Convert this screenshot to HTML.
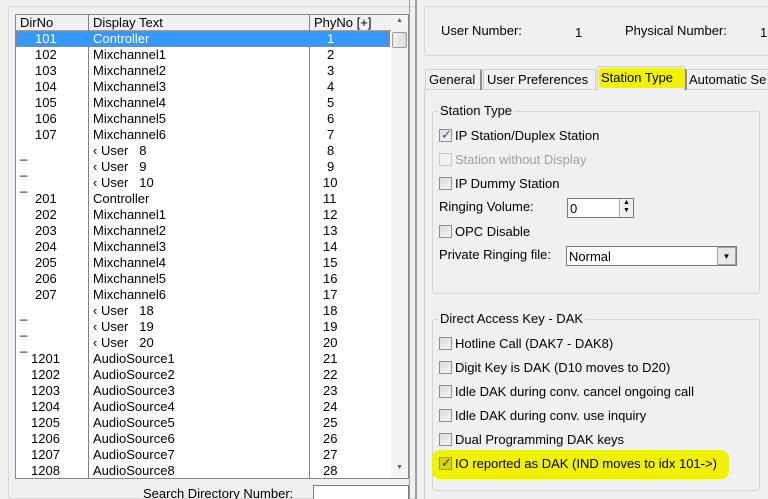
<!DOCTYPE html>
<html><head><style>
*{margin:0;padding:0;box-sizing:border-box}
html,body{width:768px;height:499px;overflow:hidden}
body{background:#f0f0f0;font-family:"Liberation Sans",sans-serif;font-size:13px;color:#000;position:relative}
.a{position:absolute;white-space:nowrap}
.row{position:absolute;left:17px;width:374px;height:16px;line-height:16px}
.row span{position:absolute;top:0}
.cb{position:absolute;width:13px;height:13px;border:1px solid #8f8f8f;background:linear-gradient(135deg,#dcdcdc,#f6f6f6)}
.lbl{position:absolute;white-space:nowrap}
.chk{position:absolute;left:1px;top:-3px;font-size:13px;color:#3a4fa0}
</style></head><body>
<div class="a" style="left:8px;top:6px;width:408px;height:493px;border:1px solid #d8d8d8;border-radius:3px"></div>
<div class="a" style="left:409px;top:0;width:1px;height:499px;background:#a0a0a0"></div>
<div class="a" style="left:415px;top:0;width:2px;height:499px;background:#a0a0a0"></div>
<div class="a" style="left:15px;top:14px;width:394px;height:465px;border:1px solid #828790;background:#fff"></div>
<div class="a" style="left:16px;top:15px;width:375px;height:16px;background:#f0f0f0;border-bottom:1px solid #a0a0a0"></div>
<div class="a" style="left:88px;top:15px;width:1px;height:463px;background:#808080"></div>
<div class="a" style="left:309px;top:15px;width:1px;height:463px;background:#808080"></div>
<div class="a" style="left:20px;top:15px;line-height:16px">DirNo</div>
<div class="a" style="left:93px;top:15px;line-height:16px">Display Text</div>
<div class="a" style="left:314px;top:15px;line-height:16px">PhyNo [+]</div>
<div class="a" style="left:391px;top:15px;width:17px;height:463px;background:#f4f4f4"></div>
<div class="a" style="left:396px;top:17px;font-size:7px;color:#606060">▲</div>
<div class="a" style="left:392px;top:32px;width:15px;height:16px;border:1px solid #9a9a9a;border-radius:2px;background:linear-gradient(90deg,#f2f2f2,#dcdcdc)"></div>
<div class="a" style="left:396px;top:464px;font-size:7px;color:#606060">▼</div>
<div class="a" style="left:16px;top:31px;width:374px;height:16px;background:#3399ff;outline:1px dotted #c08040;outline-offset:-1px"></div>
<div id="rows"></div>
<div class="a" style="left:143px;top:486px">Search Directory Number:</div>
<div class="a" style="left:313px;top:485px;width:96px;height:20px;border:1px solid #7a7a7a;background:#fff"></div>
<div class="a" style="left:424px;top:6px;width:350px;height:50px;border:1px solid #d8d8d8;border-radius:3px"></div>
<div class="a" style="left:441px;top:23px">User Number:</div>
<div class="a" style="left:575px;top:25px">1</div>
<div class="a" style="left:625px;top:23px">Physical Number:</div>
<div class="a" style="left:760px;top:25px">1</div>
<div class="a" style="left:424px;top:89px;width:350px;height:412px;border:1px solid #d0d0d0;background:#f0f0f0"></div>
<div class="a" style="left:425px;top:69px;width:57px;height:21px;border:1px solid #d0d0d0;border-bottom:none;border-right:2px solid #909090"></div>
<div class="a" style="left:429px;top:72px">General</div>
<div class="a" style="left:483px;top:69px;width:113px;height:21px;border:1px solid #d0d0d0;border-bottom:none"></div>
<div class="a" style="left:487px;top:72px">User Preferences</div>
<div class="a" style="left:597px;top:66px;width:88px;height:25px;border:1px solid #d0d0d0;border-bottom:none;background:#f0f0f0"></div>
<div class="a" style="left:599px;top:68px;width:86px;height:20px;background:#f2f200;border-radius:3px"></div>
<div class="a" style="left:601px;top:70px">Station Type</div>
<div class="a" style="left:685px;top:69px;width:2px;height:21px;background:#909090"></div>
<div class="a" style="left:688px;top:69px;width:90px;height:21px;border-top:1px solid #d0d0d0"></div>
<div class="a" style="left:689px;top:72px">Automatic Se</div>
<div class="a" style="left:432px;top:111px;width:328px;height:183px;border:1px solid #d5d5d5;border-radius:3px"></div>
<div class="a" style="left:438px;top:103px;padding:0 2px;background:#f0f0f0">Station Type</div>
<div class="cb" style="left:439px;top:129px"><span class="chk">✓</span></div><div class="lbl" style="left:455px;top:128px">IP Station/Duplex Station</div>
<div class="cb" style="left:439px;top:153px;border-color:#c8c8c8;background:#f0f0f0"></div><div class="lbl" style="left:455px;top:152px;color:#a0a0a0">Station without Display</div>
<div class="cb" style="left:439px;top:177px"></div><div class="lbl" style="left:455px;top:176px">IP Dummy Station</div>
<div class="lbl" style="left:439px;top:199px">Ringing Volume:</div>
<div class="a" style="left:567px;top:198px;width:67px;height:20px;border:1px solid #7a7a7a;background:#fff"></div>
<div class="a" style="left:570px;top:201px">0</div>
<div class="a" style="left:619px;top:199px;width:14px;height:18px;border-left:1px solid #aaa;background:#f0f0f0;font-size:7px;line-height:8px;text-align:center">▲<br>▼</div>
<div class="cb" style="left:439px;top:225px"></div><div class="lbl" style="left:455px;top:224px">OPC Disable</div>
<div class="lbl" style="left:439px;top:247px">Private Ringing file:</div>
<div class="a" style="left:566px;top:246px;width:171px;height:20px;border:1px solid #7a7a7a;background:#fff"></div>
<div class="a" style="left:569px;top:249px">Normal</div>
<div class="a" style="left:717px;top:247px;width:19px;height:18px;border:1px solid #a0a0a0;background:#e8e8e8;font-size:8px;text-align:center;line-height:18px">▼</div>
<div class="a" style="left:432px;top:319px;width:328px;height:172px;border:1px solid #d5d5d5;border-radius:3px"></div>
<div class="a" style="left:438px;top:311px;padding:0 2px;background:#f0f0f0">Direct Access Key - DAK</div>
<div class="cb" style="left:439px;top:337px"></div><div class="lbl" style="left:455px;top:336px">Hotline Call (DAK7 - DAK8)</div>
<div class="cb" style="left:439px;top:361px"></div><div class="lbl" style="left:455px;top:360px">Digit Key is DAK (D10 moves to D20)</div>
<div class="cb" style="left:439px;top:385px"></div><div class="lbl" style="left:455px;top:384px">Idle DAK during conv. cancel ongoing call</div>
<div class="cb" style="left:439px;top:409px"></div><div class="lbl" style="left:455px;top:408px">Idle DAK during conv. use inquiry</div>
<div class="cb" style="left:439px;top:433px"></div><div class="lbl" style="left:455px;top:432px">Dual Programming DAK keys</div>
<div class="a" style="left:432px;top:450px;width:297px;height:29px;background:#f2f200;border-radius:8px"></div>
<div class="cb" style="left:439px;top:457px;background:#d8d800"><span class="chk" style="color:#404000">✓</span></div><div class="lbl" style="left:455px;top:456px">IO reported as DAK (IND moves to idx 101-&gt;)</div>
<script>
var d=[["101","Controller","1"],["102","Mixchannel1","2"],["103","Mixchannel2","3"],["104","Mixchannel3","4"],["105","Mixchannel4","5"],["106","Mixchannel5","6"],["107","Mixchannel6","7"],["_","‹ User   8","8"],["_","‹ User   9","9"],["_","‹ User   10","10"],["201","Controller","11"],["202","Mixchannel1","12"],["203","Mixchannel2","13"],["204","Mixchannel3","14"],["205","Mixchannel4","15"],["206","Mixchannel5","16"],["207","Mixchannel6","17"],["_","‹ User   18","18"],["_","‹ User   19","19"],["_","‹ User   20","20"],["1201","AudioSource1","21"],["1202","AudioSource2","22"],["1203","AudioSource3","23"],["1204","AudioSource4","24"],["1205","AudioSource5","25"],["1206","AudioSource6","26"],["1207","AudioSource7","27"],["1208","AudioSource8","28"]];
var h="";d.forEach(function(r,i){var c=i==0?"color:#fff;":"";var dl=r[0]=="_"?"left:3px;top:3px":(r[0].length==4?"left:14px":"left:18px");var pl=r[2].length==2?"left:306px":"left:310px";h+='<div class="row" style="'+c+'top:'+(31+16*i)+'px"><span style="'+dl+'">'+r[0]+'</span><span style="left:76px;white-space:pre">'+r[1]+'</span><span style="'+pl+'">'+r[2]+'</span></div>';});
document.getElementById("rows").innerHTML=h;
</script>
</body></html>
